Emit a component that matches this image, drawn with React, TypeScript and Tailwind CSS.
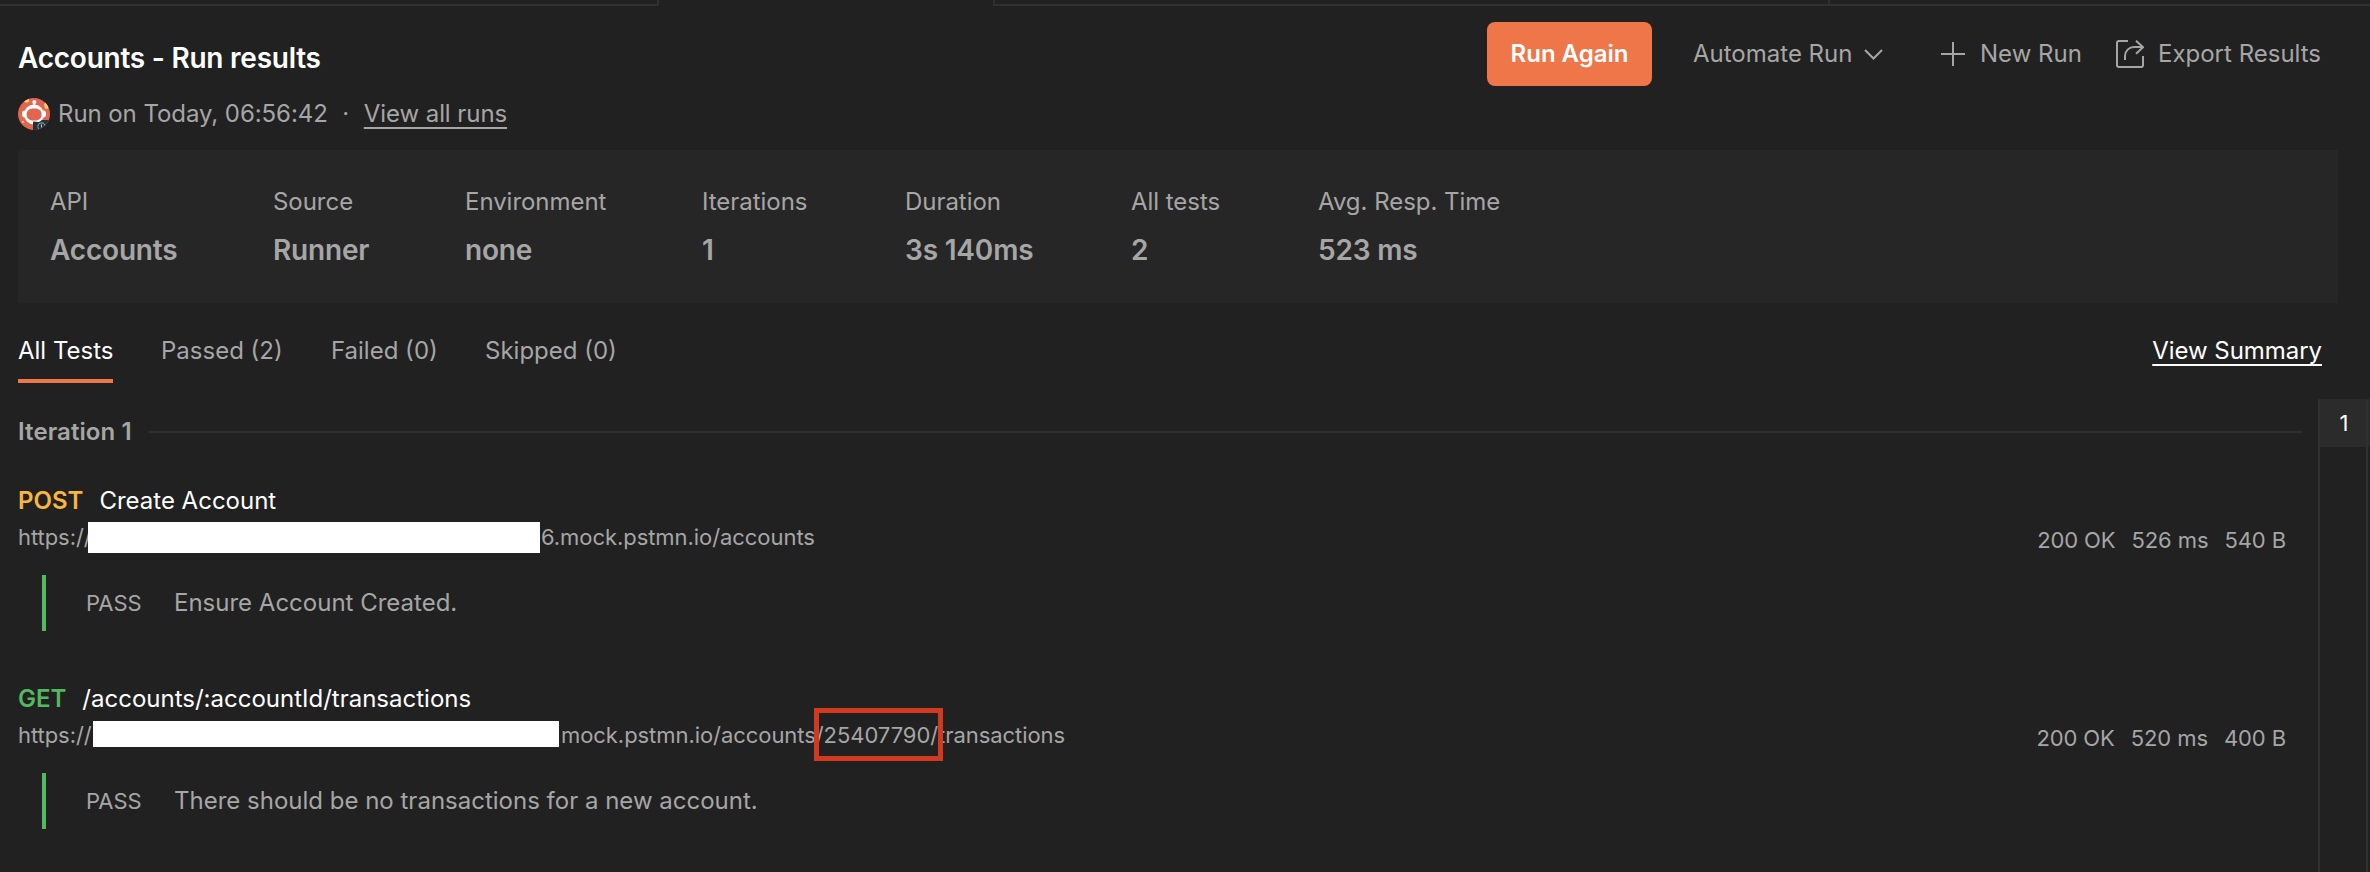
import type { ReactNode } from "react";

type Stat = { label: string; value: string; width: string };

const stats: Stat[] = [
  { label: "API", value: "Accounts", width: "w-[223px]" },
  { label: "Source", value: "Runner", width: "w-[192px]" },
  { label: "Environment", value: "none", width: "w-[237px]" },
  { label: "Iterations", value: "1", width: "w-[203px]" },
  { label: "Duration", value: "3s 140ms", width: "w-[226px]" },
  { label: "All tests", value: "2", width: "w-[187px]" },
  { label: "Avg. Resp. Time", value: "523 ms", width: "w-[240px]" },
];

function TabEdges() {
  return (
    <div className="flex h-[6px] shrink-0">
      <div className="w-[659px] border-r-2 border-b-2 border-[#303030]" />
      <div className="w-[334px]" />
      <div className="w-[837px] border-x-2 border-b-2 border-[#303030]" />
      <div className="flex-1 border-b-2 border-[#303030]" />
    </div>
  );
}

function Avatar() {
  return (
    <svg className="h-8 w-8 shrink-0" viewBox="0 0 32 32">
      <defs>
        <clipPath id="avatar">
          <circle cx="16" cy="16" r="16" />
        </clipPath>
      </defs>
      <g clipPath="url(#avatar)">
        <rect width="32" height="32" fill="#e2654f" />
        <circle cx="8.5" cy="2" r="2.6" fill="#f7cf6b" />
        <ellipse cx="28.5" cy="7.5" rx="2.2" ry="3.4" fill="#f7cf6b" />
        <circle cx="5" cy="24" r="1.3" fill="#f7b25a" />
        <circle cx="16.3" cy="4" r="2" fill="#fff" />
        <path d="M16.3 5v4" stroke="#fff" strokeWidth="1.6" />
        <rect x="4" y="12.5" width="24" height="7" rx="3" fill="#fff" />
        <circle cx="16" cy="16.5" r="10" fill="#fff" />
        <rect x="8.6" y="10.5" width="15" height="12" rx="5.6" fill="#e2654f" />
        <path d="M15 23.5l6 .5 3-2h8v10H15z" fill="#263238" />
        <circle cx="23.5" cy="28.5" r="3.6" fill="none" stroke="#7f9aa3" strokeWidth="1.1" />
        <path d="M23.5 26.5v3" stroke="#b9cdd3" strokeWidth="1.1" />
      </g>
    </svg>
  );
}

function Header() {
  return (
    <header className="flex h-[144px] shrink-0">
      <div className="flex flex-col pl-[18px]">
        <h1 className="mt-[32px] text-[28px] leading-[40px] font-semibold tracking-[-0.24px] text-white">
          Accounts - Run results
        </h1>
        <div className="mt-[20px] flex h-8 items-center tracking-[-0.07px]">
          <Avatar />
          <span className="ml-2">Run on Today, 06:56:42</span>
          <span className="w-[36px] text-center">·</span>
          <a className="underline decoration-2 underline-offset-[5px]">View all runs</a>
        </div>
      </div>
      <div className="mt-[16px] ml-auto flex h-16 items-center whitespace-nowrap">
        <button className="flex h-16 w-[165px] items-center justify-center rounded-lg bg-[#ef7649] font-semibold text-white">
          Run Again
        </button>
        <button className="flex w-[248px] items-center pl-[41px]">
          Automate Run
          <svg className="ml-[12px] h-[11px] w-[19px]" viewBox="0 0 19 11" fill="none" stroke="currentColor" strokeWidth="2">
            <path d="M1 1l8.5 8.5L18 1" />
          </svg>
        </button>
        <button className="flex w-[174px] items-center pl-[41px]">
          <svg className="h-6 w-6 shrink-0" viewBox="0 0 24 24" stroke="currentColor" strokeWidth="2">
            <path d="M12 0v24M0 12h24" />
          </svg>
          <span className="ml-[15px]">New Run</span>
        </button>
        <button className="flex w-[296px] items-center pl-[42px]">
          <svg className="h-7 w-7 shrink-0" viewBox="0 0 28 28" fill="none" stroke="currentColor" strokeWidth="2">
            <path d="M12 1H3a2 2 0 0 0-2 2v22a2 2 0 0 0 2 2h22a2 2 0 0 0 2-2v-9" />
            <path d="M9 20v-4a9 9 0 0 1 9-9h9M20 0.7l7 6.5-7 6.5" />
          </svg>
          <span className="ml-[14px]">Export Results</span>
        </button>
      </div>
    </header>
  );
}

function StatsPanel() {
  return (
    <section className="mr-[32px] ml-[18px] flex h-[153px] shrink-0 bg-[#262626] pl-[32px]">
      {stats.map((s) => (
        <div key={s.label} className={s.width}>
          <div className="mt-[36px] leading-[32px] tracking-[-0.04px]">{s.label}</div>
          <div className="mt-[12px] text-[28px] leading-[40px] font-semibold tracking-[-0.18px]">{s.value}</div>
        </div>
      ))}
    </section>
  );
}

function Tabs() {
  return (
    <nav className="flex h-[96px] shrink-0 pr-[48px] pl-[18px] leading-[32px]">
      <div className="mt-[32px] h-[48px] w-[95px] border-b-4 border-[#ef7649] whitespace-nowrap text-white">All Tests</div>
      <div className="mt-[32px] ml-[48px] w-[122px] whitespace-nowrap">Passed (2)</div>
      <div className="mt-[32px] ml-[48px] w-[107px] whitespace-nowrap">Failed (0)</div>
      <div className="mt-[32px] ml-[47px] whitespace-nowrap">Skipped (0)</div>
      <a className="mt-[32px] ml-auto tracking-[-0.05px] text-white underline decoration-2 underline-offset-[5px]">View Summary</a>
    </nav>
  );
}

type RequestProps = {
  method: string;
  methodClass: string;
  name: string;
  url: ReactNode;
  metrics: [string, string, string];
  test: string;
};

function RequestResult({ method, methodClass, name, url, metrics, test }: RequestProps) {
  return (
    <article className="h-[198px]">
      <div className="flex h-[32px] items-center">
        <span className={methodClass}>{method}</span>
        <span className="ml-4 text-white">{name}</span>
      </div>
      <div className="flex h-[42px] items-center text-[22px] tracking-[-0.06px]">
        <div className="flex h-[40px] items-center self-start whitespace-nowrap">{url}</div>
        <div className="mt-[4px] ml-auto flex gap-4 pr-[16px] tracking-[-0.1px]">
          {metrics.map((m) => (
            <span key={m}>{m}</span>
          ))}
        </div>
      </div>
      <div className="mt-[16px] ml-[24px] flex h-[56px] items-center border-l-4 border-[#52b95f]">
        <span className="ml-[40px] w-[88px] text-[22px] tracking-[-0.06px]">PASS</span>
        <span>{test}</span>
      </div>
    </article>
  );
}

export default function App() {
  return (
    <div className="flex h-[872px] w-[2370px] flex-col overflow-hidden bg-[#212121] font-['Inter',sans-serif] text-[24px] leading-[32px] text-[#a6a6a6]">
      <TabEdges />
      <Header />
      <StatsPanel />
      <Tabs />
      <div className="flex flex-1">
        <main className="w-[2318px] pr-[16px] pl-[18px]">
          <div className="mt-[16px] flex h-[34px] items-center">
            <h2 className="w-[131px] font-semibold tracking-[0.08px] whitespace-nowrap">Iteration 1</h2>
            <div className="h-[2px] flex-1 bg-[#303030]" />
          </div>
          <div className="mt-[36px]">
            <RequestResult
              method="POST"
              methodClass="font-semibold text-[#f9b63c]"
              name="Create Account"
              url={
                <>
                  <span className="w-[70px]">https://</span>
                  <span className="relative mt-[1px] h-[31px] w-[452px] bg-white" />
                  <span className="ml-[1px]">6.mock.pstmn.io/accounts</span>
                </>
              }
              metrics={["200 OK", "526 ms", "540 B"]}
              test="Ensure Account Created."
            />
            <RequestResult
              method="GET"
              methodClass="font-semibold text-[#52b95f]"
              name="/accounts/:accountId/transactions"
              url={
                <>
                  <span className="w-[75px]">https://</span>
                  <span className="mb-[2px] h-[26px] w-[466px] bg-white" />
                  <span className="ml-[2px]">mock.pstmn.io/accounts</span>
                  <span className="relative">
                    /25407790/
                    <span className="absolute -top-[11px] -left-[2px] h-[53px] w-[129px] border-[5px] border-[#d23a20]" />
                  </span>
                  <span>transactions</span>
                </>
              }
              metrics={["200 OK", "520 ms", "400 B"]}
              test="There should be no transactions for a new account."
            />
          </div>
        </main>
        <aside className="flex w-[52px] border-l-2 border-[#303030]">
          <div className="w-[48px] border-r-2 border-[#303030]">
            <div className="h-[48px] bg-[#2b2b2b] pl-[2px] text-center text-[22px] leading-[48px] text-white">1</div>
          </div>
          <div className="h-[48px] w-[2px] bg-[#2b2b2b]" />
        </aside>
      </div>
    </div>
  );
}
